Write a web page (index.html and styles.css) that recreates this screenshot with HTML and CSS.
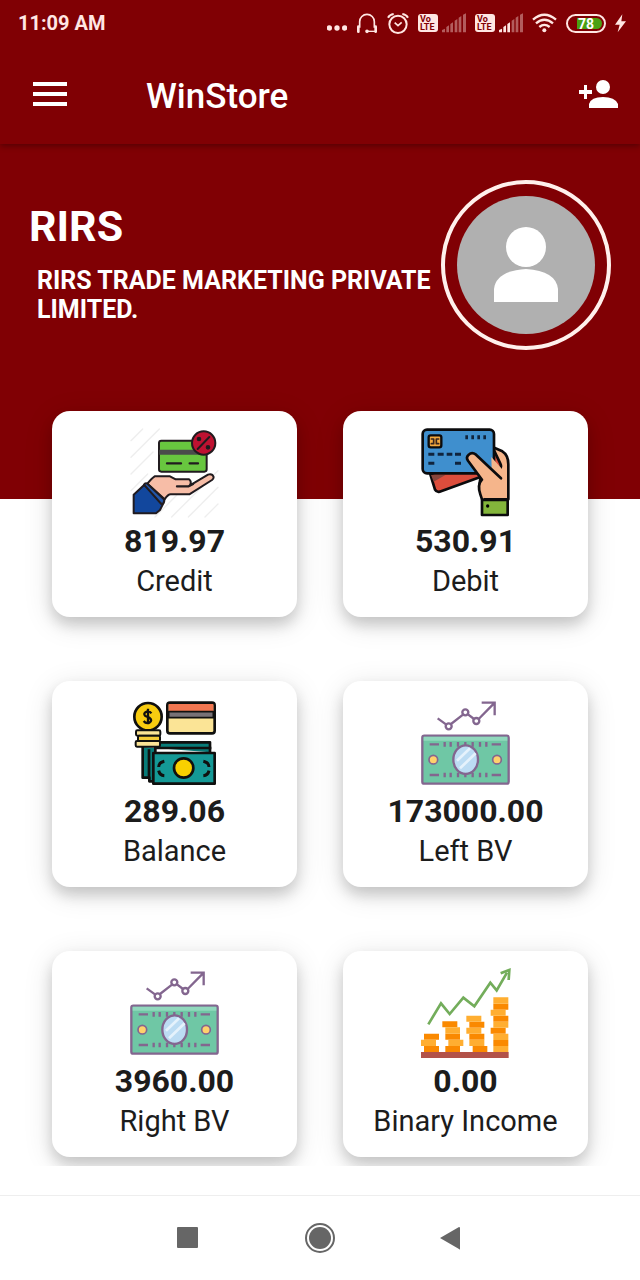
FILE: index.html
```
<!DOCTYPE html>
<html lang="en">
<head>
    <meta charset="UTF-8">
    <meta name="viewport" content="width=device-width, initial-scale=1.0">
    <title>WinStore</title>
    <link rel="stylesheet" href="styles.css">
</head>
<body>

<header class="header">
    <!-- Status bar -->
    <div class="status-bar">
        <span class="clock">11:09 AM</span>
        <div class="status-icons">
            <svg width="20" height="24" viewBox="27 27 60 72" fill="currentColor">
                <circle cx="34" cy="78" r="8"/><circle cx="57" cy="78" r="8"/><circle cx="80" cy="78" r="8"/>
            </svg>
            <svg width="22" height="24" viewBox="110 30 66 72" fill="none" stroke="currentColor" stroke-width="5">
                <path d="M121 80V62a22 22 0 0 1 44 0v18"/>
                <path d="M117 77v15M169 77v15" stroke-width="8" stroke-linecap="round"/>
                <path d="M167 91h-24" stroke-width="4"/>
                <circle cx="143" cy="91" r="3" fill="currentColor"/>
            </svg>
            <svg width="22" height="24" viewBox="203 30 66 72" fill="none" stroke="currentColor" stroke-width="6">
                <circle cx="236" cy="70" r="26"/>
                <path d="M226 65l10 9 11-10" stroke-width="5"/>
                <path d="M206 50q5-9 17-11M266 50q-5-9-17-11"/>
            </svg>
            <div class="sim">
                <span class="volte">Vo<br>LTE</span>
                <svg width="24" height="24" viewBox="366 30 72 72" fill="currentColor" opacity=".4">
                    <path d="M366 94v-7l9-4v11zM379 94V78l8-5v21zM391 94V69l8-5v30zM404 94V59l8-5v40zM416 94V50l8-5v49zM429 94V41l9-4v57z"/>
                </svg>
            </div>
            <div class="sim">
                <span class="volte">Vo<br>LTE</span>
                <svg width="24" height="24" viewBox="366 30 72 72" fill="currentColor">
                    <path d="M366 94v-7l9-4v11zM379 94V78l8-5v21zM391 94V69l8-5v30z"/>
                    <path d="M404 94V59l8-5v40zM416 94V50l8-5v49zM429 94V41l9-4v57z" opacity=".4"/>
                </svg>
            </div>
            <svg width="25" height="24" viewBox="639 30 75 72" fill="none" stroke="currentColor" stroke-width="7">
                <path d="M642 56q34-29 69 0M651 67q25-22 51 0M661 78q15-13 31 0"/>
                <circle cx="676" cy="88" r="6" fill="currentColor" stroke="none"/>
            </svg>
            <span class="battery"><span class="battery-level">78</span></span>
            <svg width="11" height="24" viewBox="885 30 33 72" fill="currentColor">
                <path d="M907 40l-22 31h14l-6 23 25-33h-14z"/>
            </svg>
        </div>
    </div>

    <!-- App bar -->
    <div class="app-bar">
        <button class="icon-btn" aria-label="Menu">
            <svg width="34" height="26" viewBox="0 0 34 26" stroke="currentColor" stroke-width="4">
                <path d="M0 3h34M0 13h34M0 23h34"/>
            </svg>
        </button>
        <h1 class="app-title">WinStore</h1>
        <button class="icon-btn" aria-label="Add member">
            <svg width="40" height="30" viewBox="0 0 40 30" fill="currentColor">
                <circle cx="25" cy="8" r="7"/>
                <path d="M11 29v-4q2-7 14-7t15 7v4zM6 6h3v5h5v4H9v5H6v-5H1v-4h5z"/>
            </svg>
        </button>
    </div>
</header>

<section class="hero">
    <div class="account">
        <h2>RIRS</h2>
        <p>RIRS TRADE MARKETING PRIVATE LIMITED.</p>
    </div>
    <div class="avatar">
        <svg viewBox="0 0 138 138">
            <circle cx="69" cy="69" r="69" fill="#b0b0b0"/>
            <circle cx="69" cy="51" r="20" fill="#fff"/>
            <path d="M37 106V93q2-18 32-20 30 2 32 20v13z" fill="#fff"/>
        </svg>
    </div>
</section>

<main class="cards">
    <div class="card">
        <svg class="card-icon" viewBox="33 27 264 264" stroke-linecap="round" stroke-linejoin="round">
            <path d="M33 62l35-35M33 112l85-85M33 162l66-66M33 212l50-50M105 291l65-65M155 291l139-139M205 291l89-89M255 291l39-39" stroke="#eee" stroke-width="4"/>
            <g stroke="#211b1f" stroke-width="6">
                <rect x="117" y="62" width="143" height="93" rx="7" fill="#68c63f"/>
                <path d="M118 97h141" stroke="#4a4b4b" stroke-width="15" stroke-linecap="butt"/>
                <path d="M141 130h42M209 130h25" stroke-width="7"/>
                <circle cx="251" cy="69" r="35" fill="#be1231"/>
                <path d="M233 87l35-36"/>
                <circle cx="237" cy="57" r="4"/><circle cx="264" cy="82" r="4"/>
                <path d="M82 191q14-17 22-22h46l17 9h40q9 7 3 18l54-32q13-4 17 7 0 5-5 9l-68 43h-56q-8 0-18 15z" fill="#f7bda7"/>
                <path d="M171 199h35l13-7" fill="none" stroke-width="7"/>
                <path d="M41 280v-56l32-30 57 56-10 20-12 10z" fill="#12479d"/>
                <path d="M72 194q3-6 9-4l50 47q4 5-1 13l-6 2z" fill="#2356a9"/>
            </g>
        </svg>
        <strong class="amount">819.97</strong>
        <span class="label">Credit</span>
    </div>

    <div class="card">
        <svg class="card-icon" viewBox="37 29 264 264" stroke-linecap="round" stroke-linejoin="round">
            <g stroke="#0b0b0d" stroke-width="8">
                <path d="M250 84l28 12q18 11 18 39v105h-75l-12-40 10-75z" fill="#f5b58b"/>
                <path d="M62 165l14 46q4 8 14 6l122-44 58-25q7-5 2-15l-20-42z" fill="#dc4d3c"/>
                <path d="M72 187l35-20H64z" fill="#87453c" stroke="none"/>
                <rect x="39" y="31" width="214" height="131" rx="13" fill="#3f8fce"/>
                <path d="M245 113l30 34v60l-58 33q-10-20-8-47l7-16-43-55q-6-12 4-20 12-7 22 4l47 40z" fill="#f5b58b" stroke="none"/>
                <path d="M274 177l-75-71q-12-9-22 0-9 8-2 18l42 57q-15 15-5 44l5 15" fill="none"/>
                <rect x="217" y="242" width="77" height="45" fill="#83b53b"/>
            </g>
            <circle cx="234" cy="260" r="5"/>
            <rect x="57" y="48" width="38" height="36" rx="6" fill="#f2a83e" stroke="#0b0b0d" stroke-width="7"/>
            <path d="M65 59h7v14h-7M87 59h-7v14h7" fill="none" stroke="#39251c" stroke-width="5"/>
            <path d="M171 48v12M189 48v12M207 48v12M225 48v12" stroke="#10243d" stroke-width="8" stroke-linecap="butt"/>
            <path d="M56 105h18M84 105h18M111 105h17M136 105h18M56 132h18M136 132h18" stroke="#10243d" stroke-width="9" stroke-linecap="butt"/>
        </svg>
        <strong class="amount">530.91</strong>
        <span class="label">Debit</span>
    </div>

    <div class="card">
        <svg class="card-icon" viewBox="33 21 264 264" stroke="#10100f" stroke-width="8" stroke-linejoin="round">
            <path d="M68 165v92h20v11h18V151h164v30" fill="#087b78"/>
            <path d="M87 172v88M102 168h172" fill="none"/>
            <rect x="100" y="183" width="184" height="92" fill="#149996"/>
            <circle cx="191" cy="228" r="29" fill="#f8d000"/>
            <path d="M116 225q0-13 17-17M116 236q3 14 17 15M267 225q0-13-17-17M267 236q-3 14-17 15" fill="none" stroke-width="9"/>
            <rect x="142" y="32" width="142" height="92" rx="8" fill="#fbe496"/>
            <path d="M146 36h134v21H146z" fill="#f37751" stroke="none"/>
            <path d="M146 59h134v18H146z" fill="#777176" stroke-width="5"/>
            <circle cx="84" cy="74" r="41" fill="#f8cc10"/>
            <path d="M94 64q-5-8-14-5-12 5-4 13l12 5q11 8 0 15-10 4-17-5M84 50v47" fill="none" stroke-width="7"/>
            <rect x="48" y="115" width="73" height="16" rx="4" fill="#fbe496" stroke-width="6"/>
            <rect x="54" y="131" width="66" height="16" rx="4" fill="#f5cc38" stroke-width="6"/>
            <rect x="47" y="147" width="73" height="17" rx="4" fill="#fbe496" stroke-width="6"/>
        </svg>
        <strong class="amount">289.06</strong>
        <span class="label">Balance</span>
    </div>

    <div class="card">
        <svg class="card-icon" viewBox="37 21 264 264" fill="none" stroke="#83668f" stroke-width="7">
            <path d="M84 79l25 18M124 96l36-28M175 67l18 14M207 81l46-47M216 32h39v38"/>
            <circle cx="117" cy="103" r="9"/><circle cx="167" cy="61" r="9"/><circle cx="200" cy="87" r="9"/>
            <rect x="38" y="131" width="259" height="144" rx="6" fill="#6fc7a5"/>
            <path d="M42 140h251" stroke="#91d8bd" stroke-width="12"/>
            <path d="M60 157h28M246 157h28M60 249h28M246 249h28M105 150v14M123 150v14M145 150v14M189 150v14M211 150v14M230 150v14M105 242v14M123 242v14M145 242v14M189 242v14M211 242v14M230 242v14M167 150v14M167 242v14"/>
            <ellipse cx="168" cy="203" rx="37" ry="43" fill="#bcdcf3"/>
            <path d="M142 206l39-37M151 229l47-45" stroke="#e5f2fc" stroke-width="8"/>
            <circle cx="71" cy="203" r="13" fill="#ffd16c" stroke-width="5"/>
            <circle cx="262" cy="203" r="13" fill="#ffd16c" stroke-width="5"/>
        </svg>
        <strong class="amount">173000.00</strong>
        <span class="label">Left BV</span>
    </div>

    <div class="card">
        <svg class="card-icon" viewBox="37 21 264 264" fill="none" stroke="#83668f" stroke-width="7">
            <path d="M84 79l25 18M124 96l36-28M175 67l18 14M207 81l46-47M216 32h39v38"/>
            <circle cx="117" cy="103" r="9"/><circle cx="167" cy="61" r="9"/><circle cx="200" cy="87" r="9"/>
            <rect x="38" y="131" width="259" height="144" rx="6" fill="#6fc7a5"/>
            <path d="M42 140h251" stroke="#91d8bd" stroke-width="12"/>
            <path d="M60 157h28M246 157h28M60 249h28M246 249h28M105 150v14M123 150v14M145 150v14M189 150v14M211 150v14M230 150v14M105 242v14M123 242v14M145 242v14M189 242v14M211 242v14M230 242v14M167 150v14M167 242v14"/>
            <ellipse cx="168" cy="203" rx="37" ry="43" fill="#bcdcf3"/>
            <path d="M142 206l39-37M151 229l47-45" stroke="#e5f2fc" stroke-width="8"/>
            <circle cx="71" cy="203" r="13" fill="#ffd16c" stroke-width="5"/>
            <circle cx="262" cy="203" r="13" fill="#ffd16c" stroke-width="5"/>
        </svg>
        <strong class="amount">3960.00</strong>
        <span class="label">Right BV</span>
    </div>

    <div class="card">
        <svg class="card-icon" viewBox="37 27 264 264">
            <path d="M56 193l38-63 26 32 41-49 33 26 48-71 19 23 31-53" fill="none" stroke="#73ad5b" stroke-width="8"/>
            <path d="M273 40l26-10-2 30" fill="none" stroke="#73ad5b" stroke-width="8"/>
            <path d="M43 221h45v18H43zM43 258h45v18H43zM98 184h45v18H98zM107 221h44v18h-44zM107 258h44v18h-44zM179 185h45v18h-45zM179 221h45v18h-45zM189 258h44v18h-44zM251 131h45v18h-45zM251 167h45v18h-45zM243 203h45v18h-45zM251 240h45v18h-45z" fill="#fa8900"/>
            <path d="M34 239h45v19H34zM107 202h44v19h-44zM116 239h45v19h-45zM170 167h45v18h-45zM170 203h45v18h-45zM179 239h45v19h-45zM251 112h45v19h-45zM243 149h45v18h-45zM251 185h45v18h-45zM251 221h45v19h-45zM251 258h45v18h-45z" fill="#ffae31"/>
            <path d="M34 276h263v18H34z" fill="#b25249"/>
        </svg>
        <strong class="amount">0.00</strong>
        <span class="label">Binary Income</span>
    </div>
</main>

<!-- Android navigation -->
<nav class="nav-bar">
    <button class="nav-btn" aria-label="Recent apps">
        <svg width="34" height="34" viewBox="0 0 34 34"><rect x="6" y="6" width="21" height="21" rx="1"/></svg>
    </button>
    <button class="nav-btn" aria-label="Home">
        <svg width="34" height="34" viewBox="0 0 34 34"><circle cx="17" cy="17" r="14" fill="none" stroke="currentColor" stroke-width="2"/><circle cx="17" cy="17" r="11"/></svg>
    </button>
    <button class="nav-btn" aria-label="Back">
        <svg width="34" height="34" viewBox="0 0 34 34"><path d="M5 17L24 6q1 0 1 1v21q0 1-1 0z"/></svg>
    </button>
</nav>

</body>
</html>
```
FILE: styles.css
```
* {
    box-sizing: border-box;
}
body {
    margin: 0;
    min-height: 100vh;
    display: flex;
    flex-direction: column;
    background-color: #fff;
    color: #1c1c1c;
    font-family: Roboto, "Liberation Sans", sans-serif;
}
h1, h2, p {
    margin: 0;
}
svg {
    display: block;
}
button {
    padding: 0;
    border: none;
    background: none;
    color: inherit;
    cursor: pointer;
}

/* Header */
.header {
    position: relative;
    background-color: #800004;
    color: #fff;
    box-shadow: 0 2px 6px rgba(0,0,0,0.35);
}
.status-bar {
    display: flex;
    justify-content: space-between;
    align-items: center;
    height: 46px;
    padding: 0 14px 0 18px;
    color: #ffe6e3;
}
.clock {
    font-size: 20px;
    font-weight: 700;
}
.status-icons {
    display: flex;
    align-items: center;
    gap: 9px;
}
.sim {
    display: flex;
    align-items: center;
    gap: 4px;
}
.volte {
    width: 20px;
    height: 18px;
    padding: 1px 2px;
    border-radius: 3px;
    background-color: #ffe6e3;
    color: #800004;
    font-size: 9px;
    font-weight: 700;
    line-height: 8px;
}
.battery {
    display: flex;
    align-items: center;
    width: 40px;
    height: 19px;
    padding: 2px;
    border: 2px solid #ffe6e3;
    border-radius: 10px;
}
.battery-level {
    width: 100%;
    height: 11px;
    border-radius: 6px;
    background: linear-gradient(to right, #800004 22%, #4aa012 22%);
    color: #fff;
    font-size: 14px;
    font-weight: 700;
    line-height: 12px;
    text-align: center;
}
.app-bar {
    display: flex;
    align-items: center;
    height: 98px;
    padding: 0 22px 2px 33px;
}
.app-title {
    flex: 1;
    margin-left: 79px;
    padding-top: 5px;
    font-size: 35px;
    font-weight: 500;
    line-height: 40px;
}

/* Company details */
.hero {
    display: flex;
    justify-content: space-between;
    align-items: flex-start;
    min-height: 355px;
    padding: 36px 29px 0;
    background-color: #800004;
    color: #fff;
}
.account {
    padding-top: 20px;
}
.account h2 {
    font-size: 43px;
    line-height: 52px;
}
.account p {
    margin-top: 14px;
    padding-left: 8px;
    font-size: 25px;
    font-weight: 700;
    line-height: 29px;
}
.avatar {
    flex: none;
    width: 170px;
    padding: 12px;
    border: 4px solid #fff0ec;
    border-radius: 50%;
}

/* Cards */
.cards {
    position: relative;
    display: grid;
    grid-template-columns: 1fr 1fr;
    gap: 64px 46px;
    margin-top: -108px;
    padding: 20px 52px 9px;
    overflow: hidden;
}
.card {
    display: flex;
    flex-direction: column;
    align-items: center;
    padding: 18px 8px 16px;
    border-radius: 18px;
    background-color: #fff;
    box-shadow: 0 8px 14px rgba(0,0,0,0.16), 0 6px 30px rgba(0,0,0,0.12);
}
.card-icon {
    width: 88px;
    height: 88px;
    margin-bottom: 4px;
    overflow: visible;
}
.amount {
    font-size: 32px;
    line-height: 40px;
}
.label {
    font-size: 29px;
    line-height: 40px;
}

/* Bottom navigation */
.nav-bar {
    display: flex;
    justify-content: center;
    align-items: center;
    gap: 98px;
    height: 85px;
    margin-top: auto;
    border-top: 1px solid #eee;
}
.nav-btn {
    color: #666;
}
.nav-btn svg {
    fill: currentColor;
}
```
